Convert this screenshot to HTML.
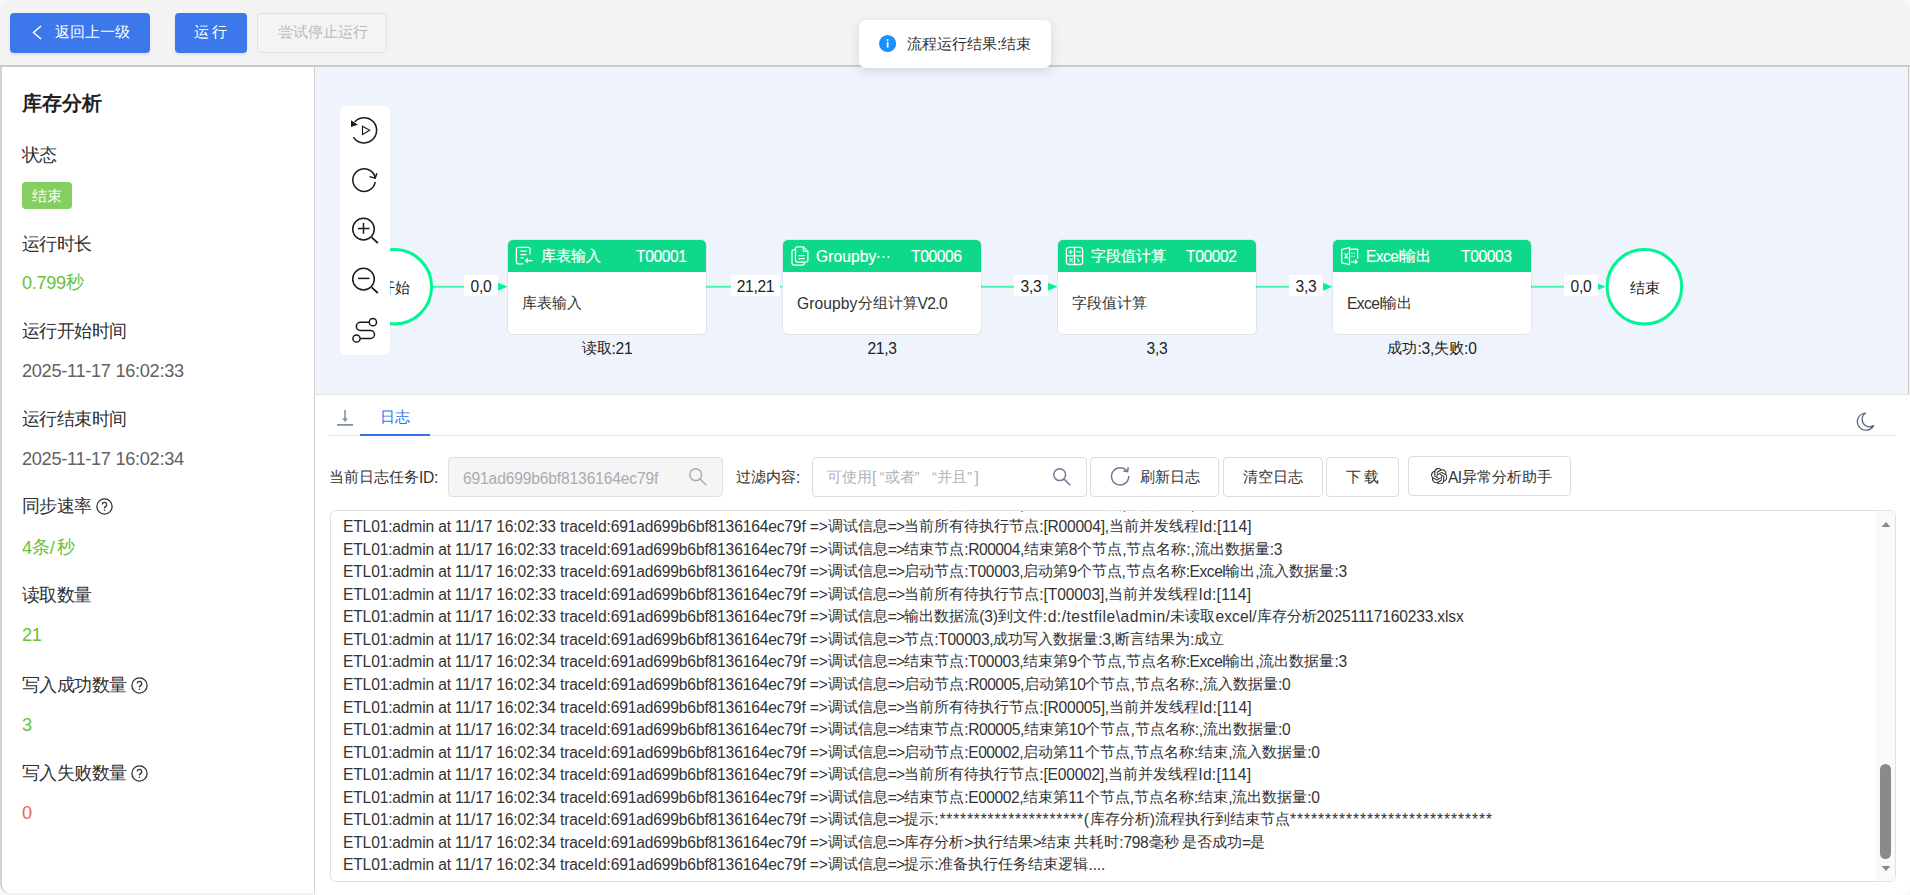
<!DOCTYPE html><html><head><meta charset="utf-8"><style>*{margin:0;padding:0;box-sizing:content-box}
html,body{width:1910px;height:895px;overflow:hidden}
body{position:relative;background:#f3f3f3;font-family:"Liberation Sans",sans-serif}
.abs{position:absolute}
.t{position:absolute;white-space:pre}
.btn{position:absolute;border-radius:4px}
.pri{background:#3c78ec;box-shadow:0 2px 3px rgba(0,0,0,0.08)}
.node{position:absolute;width:198px;height:94px;background:#fff;border-radius:5px;box-shadow:0 0 0 1px rgba(0,0,0,0.06);overflow:hidden}
.nh{height:32px;background:#0ed98a}
.qr{display:inline-block;width:15px;text-align:right}
.ql{display:inline-block;width:15px;text-align:left}
</style></head><body>
<div class="btn pri" style="left:10px;top:13px;width:140px;height:40px"></div>
<svg class="abs" style="left:0;top:0" width="60" height="60"><polyline points="41,26 33.5,32.5 41,39" fill="none" stroke="#fff" stroke-width="1.5"/></svg>
<div class="t" style="left:55px;top:17px;font-size:15px;font-weight:400;color:#fff;line-height:30px;">返回上一级</div>
<div class="btn pri" style="left:175px;top:13px;width:72px;height:40px"></div>
<div class="t" style="left:194px;top:17px;font-size:15px;font-weight:400;color:#fff;line-height:30px;">运</div>
<div class="t" style="left:212px;top:17px;font-size:15px;font-weight:400;color:#fff;line-height:30px;">行</div>
<div class="btn" style="left:257px;top:13px;width:128px;height:38px;border:1px solid #e2e2e2;background:#f4f4f4"></div>
<div class="t" style="left:278px;top:17px;font-size:15px;font-weight:400;color:#b9babd;line-height:30px;">尝试停止运行</div>
<div class="abs" style="left:0;top:65px;width:1910px;height:2px;background:#cacaca"></div>
<div class="abs" style="left:0;top:880px;width:315px;height:15px;background:#eef1f8"></div>
<div class="abs" style="left:0;top:67px;width:314px;height:826px;background:#fff;border-left:2px solid #d2d2d2;border-bottom-left-radius:9px;box-sizing:border-box"></div>
<div class="abs" style="left:314px;top:67px;width:1px;height:826px;background:#d0d0d0"></div>
<div class="t" style="left:22px;top:88px;font-size:20px;font-weight:700;color:#222;line-height:30px;">库存分析</div>
<div class="t" style="left:22px;top:140.7px;font-size:18px;font-weight:400;color:#303133;line-height:30px;transform:scale(0.9722);transform-origin:0 0">状态</div>
<div class="t" style="left:22px;top:229.7px;font-size:18px;font-weight:400;color:#303133;line-height:30px;transform:scale(0.9722);transform-origin:0 0">运行时长</div>
<div class="t" style="left:22px;top:317.2px;font-size:18px;font-weight:400;color:#303133;line-height:30px;transform:scale(0.9722);transform-origin:0 0">运行开始时间</div>
<div class="t" style="left:22px;top:404.7px;font-size:18px;font-weight:400;color:#303133;line-height:30px;transform:scale(0.9722);transform-origin:0 0">运行结束时间</div>
<div class="t" style="left:22px;top:491.7px;font-size:18px;font-weight:400;color:#303133;line-height:30px;transform:scale(0.9722);transform-origin:0 0">同步速率</div>
<svg class="abs" style="left:96px;top:497.5px" width="18" height="18"><circle cx="8.5" cy="8.5" r="7.6" fill="none" stroke="#303133" stroke-width="1.3"/><path d="M6.3 6.6 a2.2 2.2 0 1 1 3.2 2 c-.7 .35 -1 .7 -1 1.5 v.5" fill="none" stroke="#303133" stroke-width="1.3"/><circle cx="8.5" cy="12.3" r=".8" fill="#303133"/></svg>
<div class="t" style="left:22px;top:581.2px;font-size:18px;font-weight:400;color:#303133;line-height:30px;transform:scale(0.9722);transform-origin:0 0">读取数量</div>
<div class="t" style="left:22px;top:670.7px;font-size:18px;font-weight:400;color:#303133;line-height:30px;transform:scale(0.9722);transform-origin:0 0">写入成功数量</div>
<svg class="abs" style="left:131px;top:676.5px" width="18" height="18"><circle cx="8.5" cy="8.5" r="7.6" fill="none" stroke="#303133" stroke-width="1.3"/><path d="M6.3 6.6 a2.2 2.2 0 1 1 3.2 2 c-.7 .35 -1 .7 -1 1.5 v.5" fill="none" stroke="#303133" stroke-width="1.3"/><circle cx="8.5" cy="12.3" r=".8" fill="#303133"/></svg>
<div class="t" style="left:22px;top:758.7px;font-size:18px;font-weight:400;color:#303133;line-height:30px;transform:scale(0.9722);transform-origin:0 0">写入失败数量</div>
<svg class="abs" style="left:131px;top:764.5px" width="18" height="18"><circle cx="8.5" cy="8.5" r="7.6" fill="none" stroke="#303133" stroke-width="1.3"/><path d="M6.3 6.6 a2.2 2.2 0 1 1 3.2 2 c-.7 .35 -1 .7 -1 1.5 v.5" fill="none" stroke="#303133" stroke-width="1.3"/><circle cx="8.5" cy="12.3" r=".8" fill="#303133"/></svg>
<div class="abs" style="left:22px;top:182px;width:50px;height:27px;background:#85ce61;border-radius:4px"></div>
<div class="t" style="left:31.5px;top:180.5px;font-size:15px;font-weight:400;color:#fff;line-height:30px;">结束</div>
<div class="t" style="left:22px;top:267px;font-size:17.5px;font-weight:400;color:#67c23a;line-height:30px;"><span style="font-size:18.2px;letter-spacing:-0.359px;position:relative;top:1px">0.799</span>秒</div>
<div class="t" style="left:22px;top:355px;font-size:17.5px;font-weight:400;color:#606266;line-height:30px;"><span style="font-size:18.2px;letter-spacing:-0.303px;position:relative;top:1px">2025-11-17 16:02:33</span></div>
<div class="t" style="left:22px;top:443px;font-size:17.5px;font-weight:400;color:#606266;line-height:30px;"><span style="font-size:18.2px;letter-spacing:-0.303px;position:relative;top:1px">2025-11-17 16:02:34</span></div>
<div class="t" style="left:22px;top:531.5px;font-size:17.5px;font-weight:400;color:#67c23a;line-height:30px;"><span style="font-size:18.2px;letter-spacing:-0.406px;position:relative;top:1px">4</span>条<span style="font-size:18.2px;letter-spacing:1.812px;position:relative;top:1px">/</span>秒</div>
<div class="t" style="left:22px;top:619px;font-size:17.5px;font-weight:400;color:#67c23a;line-height:30px;"><span style="font-size:18.2px;letter-spacing:-0.398px;position:relative;top:1px">21</span></div>
<div class="t" style="left:22px;top:708.7px;font-size:17.5px;font-weight:400;color:#67c23a;line-height:30px;"><span style="font-size:18.2px;letter-spacing:-0.406px;position:relative;top:1px">3</span></div>
<div class="t" style="left:22px;top:797px;font-size:17.5px;font-weight:400;color:#e9654f;line-height:30px;"><span style="font-size:18.2px;letter-spacing:-0.406px;position:relative;top:1px">0</span></div>
<div class="abs" style="left:315px;top:67px;width:1594px;height:327px;background:#eff3fb;border-right:1px solid #c6c6c6;box-sizing:border-box"></div>
<div class="abs" style="left:315px;top:394px;width:1594px;height:1px;background:#e3e5ea"></div>
<svg class="abs" style="left:0;top:0" width="1910" height="400"><line x1="433" y1="286.8" x2="502" y2="286.8" stroke="#47f5b0" stroke-width="2"/><polygon points="498,282.8 507.5,286.8 498,290.8" fill="#00f59a"/><line x1="706" y1="286.8" x2="777" y2="286.8" stroke="#47f5b0" stroke-width="2"/><polygon points="773,282.8 782.5,286.8 773,290.8" fill="#00f59a"/><line x1="981" y1="286.8" x2="1052" y2="286.8" stroke="#47f5b0" stroke-width="2"/><polygon points="1048,282.8 1057.5,286.8 1048,290.8" fill="#00f59a"/><line x1="1256" y1="286.8" x2="1327" y2="286.8" stroke="#47f5b0" stroke-width="2"/><polygon points="1323,282.8 1332.5,286.8 1323,290.8" fill="#00f59a"/><line x1="1531" y1="286.8" x2="1600" y2="286.8" stroke="#47f5b0" stroke-width="2"/><polygon points="1596,282.8 1605.5,286.8 1596,290.8" fill="#00f59a"/><circle cx="394.3" cy="286.8" r="37.3" fill="#fff" stroke="#00f593" stroke-width="3"/><circle cx="1644.4" cy="286.8" r="37.3" fill="#fff" stroke="#00f593" stroke-width="3"/></svg>
<div class="abs" style="left:464px;top:275px;width:34px;height:21px;background:#fff"></div>
<div class="t" style="left:464px;top:271px;width:34px;text-align:center;font-size:15px;line-height:30px;color:#222"><span style="font-size:15.6px;letter-spacing:-0.286px;position:relative;top:1px">0,0</span></div>
<div class="abs" style="left:731px;top:275px;width:49px;height:21px;background:#fff"></div>
<div class="t" style="left:731px;top:271px;width:49px;text-align:center;font-size:15px;line-height:30px;color:#222"><span style="font-size:15.6px;letter-spacing:-0.309px;position:relative;top:1px">21,21</span></div>
<div class="abs" style="left:1014px;top:275px;width:34px;height:21px;background:#fff"></div>
<div class="t" style="left:1014px;top:271px;width:34px;text-align:center;font-size:15px;line-height:30px;color:#222"><span style="font-size:15.6px;letter-spacing:-0.286px;position:relative;top:1px">3,3</span></div>
<div class="abs" style="left:1289px;top:275px;width:34px;height:21px;background:#fff"></div>
<div class="t" style="left:1289px;top:271px;width:34px;text-align:center;font-size:15px;line-height:30px;color:#222"><span style="font-size:15.6px;letter-spacing:-0.286px;position:relative;top:1px">3,3</span></div>
<div class="abs" style="left:1564px;top:275px;width:34px;height:21px;background:#fff"></div>
<div class="t" style="left:1564px;top:271px;width:34px;text-align:center;font-size:15px;line-height:30px;color:#222"><span style="font-size:15.6px;letter-spacing:-0.286px;position:relative;top:1px">0,0</span></div>
<div class="t" style="left:380px;top:272.5px;font-size:15px;font-weight:400;color:#222;line-height:30px;">开始</div>
<div class="t" style="left:1630px;top:272.5px;font-size:15px;font-weight:400;color:#222;line-height:30px;">结束</div>
<div class="node" style="left:508px;top:240px"><div class="nh"></div></div>
<div class="t" style="left:541px;top:241px;font-size:15px;font-weight:400;color:#fff;line-height:30px;-webkit-text-stroke:0.2px #fff">库表输入</div>
<div class="t" style="left:636px;top:241px;font-size:15px;font-weight:400;color:#fff;line-height:30px;-webkit-text-stroke:0.2px #fff"><span style="font-size:15.6px;letter-spacing:-0.378px;position:relative;top:1px">T00001</span></div>
<div class="t" style="left:522px;top:288px;font-size:15px;color:#333;line-height:30px">库表输入</div>
<div class="t" style="left:508px;top:333px;width:198px;text-align:center;font-size:15px;color:#222;line-height:30px">读取<span style="font-size:15.6px;letter-spacing:-0.286px;position:relative;top:1px">:21</span></div>
<svg class="abs" style="left:515px;top:246px" width="20" height="20"><g fill="none" stroke="#fff" stroke-width="1.25"><path d="M15 8.6 V3.4 A2 2 0 0 0 13 1.4 H3.4 A2 2 0 0 0 1.4 3.4 V15.9 A2 2 0 0 0 3.4 17.9 H8.3"/><path d="M5.4 5 H11.5 M5.4 8.5 H11.5 M5.4 11.8 H8.7"/><path d="M10.8 14.7 H17.6 M12.8 12.5 L10.6 14.7 L12.8 16.9"/></g></svg>
<div class="node" style="left:783px;top:240px"><div class="nh"></div></div>
<div class="t" style="left:816px;top:241px;font-size:15px;font-weight:400;color:#fff;line-height:30px;-webkit-text-stroke:0.2px #fff"><span style="font-size:15.6px;letter-spacing:0.100px;position:relative;top:1px">Groupby</span></div>
<div class="t" style="left:911px;top:241px;font-size:15px;font-weight:400;color:#fff;line-height:30px;-webkit-text-stroke:0.2px #fff"><span style="font-size:15.6px;letter-spacing:-0.378px;position:relative;top:1px">T00006</span></div>
<div class="t" style="left:797px;top:288px;font-size:15px;color:#333;line-height:30px"><span style="font-size:15.6px;letter-spacing:0.100px;position:relative;top:1px">Groupby</span>分组计算<span style="font-size:15.6px;letter-spacing:-0.660px;position:relative;top:1px">V2.0</span></div>
<div class="t" style="left:783px;top:333px;width:198px;text-align:center;font-size:15px;color:#222;line-height:30px"><span style="font-size:15.6px;letter-spacing:-0.301px;position:relative;top:1px">21,3</span></div>
<svg class="abs" style="left:790px;top:246px" width="20" height="20"><g fill="none" stroke="#fff" stroke-width="1.25"><path d="M7.5 0.8 H13.3 L17.9 5.4 V14.2 A2 2 0 0 1 15.9 16.2 H7.5 A2 2 0 0 1 5.5 14.2 V2.8 A2 2 0 0 1 7.5 0.8 Z"/><path d="M13.3 0.8 V3.4 A2 2 0 0 0 15.3 5.4 H17.9"/><path d="M5.5 3.6 H4 A2 2 0 0 0 2 5.6 V17.1 A2 2 0 0 0 4 19.1 H12.4 A2 2 0 0 0 14.4 17.1 V16.2"/><path d="M8.4 9.5 H14.6 M8.4 12.6 H14.6"/></g></svg>
<svg class="abs" style="left:876px;top:254px" width="20" height="6"><circle cx="2.5" cy="3" r="1.1" fill="#fff"/><circle cx="7.5" cy="3" r="1.1" fill="#fff"/><circle cx="12.5" cy="3" r="1.1" fill="#fff"/></svg>
<div class="node" style="left:1058px;top:240px"><div class="nh"></div></div>
<div class="t" style="left:1091px;top:241px;font-size:15px;font-weight:400;color:#fff;line-height:30px;-webkit-text-stroke:0.2px #fff">字段值计算</div>
<div class="t" style="left:1186px;top:241px;font-size:15px;font-weight:400;color:#fff;line-height:30px;-webkit-text-stroke:0.2px #fff"><span style="font-size:15.6px;letter-spacing:-0.378px;position:relative;top:1px">T00002</span></div>
<div class="t" style="left:1072px;top:288px;font-size:15px;color:#333;line-height:30px">字段值计算</div>
<div class="t" style="left:1058px;top:333px;width:198px;text-align:center;font-size:15px;color:#222;line-height:30px"><span style="font-size:15.6px;letter-spacing:-0.286px;position:relative;top:1px">3,3</span></div>
<svg class="abs" style="left:1065px;top:246px" width="20" height="20"><g fill="none" stroke="#fff"><rect x="1.4" y="1.4" width="16.2" height="17.1" rx="2.6" stroke-width="1.3"/><path d="M9.5 1.4 V18.5 M1.4 9.9 H17.6" stroke-width="1.3"/><path d="M3.6 6 H7.6 M5.6 4 V8 M11.2 5.8 H15.9 M4.4 12.3 L7.7 15.8 M7.7 12.3 L4.4 15.8 M12.1 12.4 L14.4 15.6" stroke-width="1.2"/></g></svg>
<div class="node" style="left:1333px;top:240px"><div class="nh"></div></div>
<div class="t" style="left:1366px;top:241px;font-size:15px;font-weight:400;color:#fff;line-height:30px;-webkit-text-stroke:0.2px #fff"><span style="font-size:15.6px;letter-spacing:-0.553px;position:relative;top:1px">Excel</span>输出</div>
<div class="t" style="left:1461px;top:241px;font-size:15px;font-weight:400;color:#fff;line-height:30px;-webkit-text-stroke:0.2px #fff"><span style="font-size:15.6px;letter-spacing:-0.378px;position:relative;top:1px">T00003</span></div>
<div class="t" style="left:1347px;top:288px;font-size:15px;color:#333;line-height:30px"><span style="font-size:15.6px;letter-spacing:-0.553px;position:relative;top:1px">Excel</span>输出</div>
<div class="t" style="left:1333px;top:333px;width:198px;text-align:center;font-size:15px;color:#222;line-height:30px">成功<span style="font-size:15.6px;letter-spacing:-0.224px;position:relative;top:1px">:3,</span>失败<span style="font-size:15.6px;letter-spacing:-0.258px;position:relative;top:1px">:0</span></div>
<svg class="abs" style="left:1340px;top:246px" width="20" height="20"><g fill="none" stroke="#fff" stroke-width="1.25" stroke-linejoin="round"><path d="M1.7 3.4 L9.5 1.7 V18.5 L1.7 16.8 Z"/><path d="M10.1 3.1 H17.6 V12.7"/><path d="M4.6 7.3 L7.8 12.6 M7.8 7.3 L4.6 12.6" stroke-width="1.1"/><path d="M11.3 7.2 H15.2 M11.3 10.2 H15.2" stroke-width="1.1" stroke-dasharray="1.3 1.1"/><path d="M11.2 15.9 H16.8 M15 13.8 L17.1 15.9 L15 18" /></g></svg>
<div class="abs" style="left:340px;top:106px;width:50px;height:249px;background:#fff;border-radius:6px"></div>
<svg class="abs" style="left:340px;top:106px" width="50" height="249">
<g fill="none" stroke="#1a1a1a" stroke-width="1.5">
<path d="M13.4 31.1 A12.6 12.6 0 1 0 14.8 15.7"/>
<path d="M22.5 20.3 L29.7 24.3 L22.5 28.5 Z" stroke-width="1.15"/>
<path d="M35.24 75.98 A11.3 11.3 0 1 1 35.24 72.22"/><polyline points="29.5,70.6 35.24,72.2 36.8,67.3"/>
<circle cx="23.5" cy="123.1" r="10.8"/><path d="M18 122.4 H29.5 M23.5 116.9 V127.7"/><path d="M31.7 131.4 L37.8 137" stroke-width="1.7"/>
<circle cx="23.5" cy="173.1" r="10.8"/><path d="M18 172.4 H29.5"/><path d="M31.7 181.4 L37.8 187" stroke-width="1.7"/>
<circle cx="32.9" cy="216.2" r="3.6"/><circle cx="16.5" cy="232.5" r="3.6"/>
<path d="M29.3 216.2 H20.5 A4.15 4.15 0 0 0 20.5 224.5 H30.5 A4.0 4.0 0 0 1 30.5 232.5 H20.1"/>
</g>
<polygon points="11,14.2 11,20.9 17.9,18.7" fill="#1a1a1a"/>
</svg>
<div class="abs" style="left:315px;top:395px;width:1595px;height:500px;background:#fff"></div>
<svg class="abs" style="left:330px;top:400px" width="30" height="30"><line x1="15" y1="10" x2="15" y2="19" stroke="#8590a6" stroke-width="1.6"/><polygon points="12,18.5 18,18.5 15,22" fill="#8590a6"/><rect x="7" y="24" width="16" height="1.8" fill="#8590a6"/></svg>
<div class="t" style="left:380px;top:401.5px;font-size:15px;font-weight:400;color:#2f6fe8;line-height:30px;">日志</div>
<div class="abs" style="left:329px;top:435px;width:1567px;height:1px;background:#e5e5e5"></div>
<div class="abs" style="left:360px;top:434px;width:70px;height:2px;background:#2f6fe8"></div>
<svg class="abs" style="left:1850px;top:405px" width="30" height="30"><path d="M15.5 8 A8.6 8.6 0 1 0 23.6 20.6 A7 7 0 0 1 15.5 8 Z" fill="none" stroke="#56617d" stroke-width="1.25" stroke-linejoin="round"/></svg>
<div class="t" style="left:329px;top:462px;font-size:15px;font-weight:400;color:#333;line-height:30px;">当前日志任务<span style="font-size:15.6px;letter-spacing:-0.349px;position:relative;top:1px">ID:</span></div>
<div class="abs" style="left:448px;top:457px;width:273px;height:38px;background:#f5f5f5;border:1px solid #e0e0e0;border-radius:4px"></div>
<div class="t" style="left:463px;top:463px;font-size:15px;font-weight:400;color:#a8abb2;line-height:30px;"><span style="font-size:15.6px;letter-spacing:-0.141px;position:relative;top:1px">691ad699b6bf8136164ec79f</span></div>
<svg class="abs" style="left:686px;top:465px" width="24" height="24"><circle cx="9.7" cy="9.7" r="5.9" fill="none" stroke="#acacac" stroke-width="1.5"/><path d="M14 14 L19.8 19.8" stroke="#acacac" stroke-width="1.6" stroke-linecap="round"/></svg>
<div class="t" style="left:736px;top:462px;font-size:15px;font-weight:400;color:#333;line-height:30px;">过滤内容<span style="font-size:15.6px;letter-spacing:-0.172px;position:relative;top:1px">:</span></div>
<div class="abs" style="left:812px;top:457px;width:273px;height:38px;background:#fff;border:1px solid #dcdcdc;border-radius:4px"></div>
<div class="t" style="left:827px;top:462px;font-size:15px;color:#b0b3b8;line-height:30px">可使用<span style="font-size:15.6px;letter-spacing:0.734px;position:relative;top:1px">[</span><span class="qr" style="width:7.5px">“</span>或者<span class="ql">”</span><span class="qr" style="width:7.5px">“</span>并且<span class="ql" style="width:7.5px">”</span><span style="font-size:15.6px;letter-spacing:0.734px;position:relative;top:1px">]</span></div>
<svg class="abs" style="left:1050px;top:465px" width="24" height="24"><circle cx="9.7" cy="9.7" r="5.9" fill="none" stroke="#6f7b99" stroke-width="1.5"/><path d="M14 14 L19.8 19.8" stroke="#6f7b99" stroke-width="1.6" stroke-linecap="round"/></svg>
<div class="abs" style="left:1090px;top:457px;width:127px;height:38px;border:1px solid #dcdcdc;border-radius:4px;background:#fff"></div>
<div class="abs" style="left:1223px;top:457px;width:98px;height:38px;border:1px solid #dcdcdc;border-radius:4px;background:#fff"></div>
<div class="abs" style="left:1326px;top:457px;width:71px;height:38px;border:1px solid #dcdcdc;border-radius:4px;background:#fff"></div>
<div class="abs" style="left:1408px;top:456px;width:161px;height:38px;border:1px solid #dcdcdc;border-radius:4px;background:#fff"></div>
<svg class="abs" style="left:1105px;top:461px" width="30" height="30"><path d="M22 10.2 A8.6 8.6 0 1 0 23.7 15" fill="none" stroke="#6b7a99" stroke-width="1.5"/><polyline points="23.2,6.2 22.6,10.6 18.4,10.1" fill="none" stroke="#6b7a99" stroke-width="1.5"/></svg>
<div class="t" style="left:1140px;top:462.2px;font-size:15px;font-weight:400;color:#333;line-height:30px;">刷新日志</div>
<div class="t" style="left:1243px;top:462.2px;font-size:15px;font-weight:400;color:#333;line-height:30px;">清空日志</div>
<div class="t" style="left:1346px;top:462.2px;font-size:15px;font-weight:400;color:#333;line-height:30px;">下</div>
<div class="t" style="left:1364px;top:462.2px;font-size:15px;font-weight:400;color:#333;line-height:30px;">载</div>
<svg class="abs" style="left:1430.5px;top:467.5px" width="16.5" height="16.5" viewBox="0 0 24 24"><path fill="#2a2a2a" d="M22.2819 9.8211a5.9847 5.9847 0 0 0-.5157-4.9108 6.0462 6.0462 0 0 0-6.5098-2.9A6.0651 6.0651 0 0 0 4.9807 4.1818a5.9847 5.9847 0 0 0-3.9977 2.9 6.0462 6.0462 0 0 0 .7427 7.0966 5.98 5.98 0 0 0 .511 4.9107 6.051 6.051 0 0 0 6.5146 2.9001A5.9847 5.9847 0 0 0 13.2599 24a6.0557 6.0557 0 0 0 5.7718-4.2058 5.9894 5.9894 0 0 0 3.9977-2.9001 6.0557 6.0557 0 0 0-.7475-7.0729zm-9.022 12.6081a4.4755 4.4755 0 0 1-2.8764-1.0408l.1419-.0804 4.7783-2.7582a.7948.7948 0 0 0 .3927-.6813v-6.7369l2.02 1.1686a.071.071 0 0 1 .038.052v5.5826a4.504 4.504 0 0 1-4.4945 4.4944zm-9.6607-4.1254a4.4708 4.4708 0 0 1-.5346-3.0137l.142.0852 4.783 2.7582a.7712.7712 0 0 0 .7806 0l5.8428-3.3685v2.3324a.0804.0804 0 0 1-.0332.0615L9.74 19.9502a4.4992 4.4992 0 0 1-6.1408-1.6464zM2.3408 7.8956a4.485 4.485 0 0 1 2.3655-1.9728V11.6a.7664.7664 0 0 0 .3879.6765l5.8144 3.3543-2.0201 1.1685a.0757.0757 0 0 1-.071 0l-4.8303-2.7865A4.504 4.504 0 0 1 2.3408 7.872zm16.5963 3.8558L13.1038 8.364 15.1192 7.2a.0757.0757 0 0 1 .071 0l4.8303 2.7913a4.4944 4.4944 0 0 1-.6765 8.1042v-5.6772a.79.79 0 0 0-.407-.667zm2.0107-3.0231l-.142-.0852-4.7735-2.7818a.7759.7759 0 0 0-.7854 0L9.409 9.2297V6.8974a.0662.0662 0 0 1 .0284-.0615l4.8303-2.7866a4.4992 4.4992 0 0 1 6.6802 4.66zM8.3065 12.863l-2.02-1.1638a.0804.0804 0 0 1-.038-.0567V6.0742a4.4992 4.4992 0 0 1 7.3757-3.4537l-.142.0805L8.704 5.459a.7948.7948 0 0 0-.3927.6813zm1.0976-2.3654l2.602-1.4998 2.6069 1.4998v2.9994l-2.5974 1.4997-2.6067-1.4997Z"/></svg>
<div class="t" style="left:1448px;top:462.2px;font-size:15px;font-weight:400;color:#333;line-height:30px;"><span style="font-size:15.6px;letter-spacing:-0.609px;position:relative;top:1px">AI</span>异常分析助手</div>
<div class="abs" style="left:330px;top:510px;width:1564px;height:370px;border:1px solid #e0e0e0;border-radius:6px;overflow:hidden;background:#fff">
<div class="abs" style="left:1545px;top:0;width:20px;height:370px;background:#fafafa"></div>
<div class="abs" style="left:1549px;top:253px;width:11px;height:95px;background:#8a8a8a;border-radius:5.5px"></div>
<svg class="abs" style="left:1545px;top:0" width="20" height="370"><polygon points="5.5,16 14.5,16 10,11" fill="#8a8a8a"/><polygon points="5.5,355 14.5,355 10,360" fill="#8a8a8a"/></svg>
<div class="abs" style="left:12px;top:-18.29px;line-height:22.54px;font-size:15px;color:#333"><div style="height:22.54px;white-space:pre"><span style="font-size:15.6px;letter-spacing:-0.156px;position:relative;top:1px">ETL01:admin at 11/17 16:02:33 traceId:691ad699b6bf8136164ec79f =&gt;</span>调试信息<span style="font-size:15.6px;letter-spacing:-0.781px;position:relative;top:1px">=&gt;</span>启动节点<span style="font-size:15.6px;letter-spacing:-0.475px;position:relative;top:1px">:R00004,</span>启动第<span style="font-size:15.6px;letter-spacing:-0.359px;position:relative;top:1px">8</span>个节点<span style="font-size:15.6px;letter-spacing:-0.172px;position:relative;top:1px">,</span>节点名称<span style="font-size:15.6px;letter-spacing:-0.164px;position:relative;top:1px">:,</span>流入数据量<span style="font-size:15.6px;letter-spacing:-0.258px;position:relative;top:1px">:3</span></div><div style="height:22.54px;white-space:pre"><span style="font-size:15.6px;letter-spacing:-0.156px;position:relative;top:1px">ETL01:admin at 11/17 16:02:33 traceId:691ad699b6bf8136164ec79f =&gt;</span>调试信息<span style="font-size:15.6px;letter-spacing:-0.781px;position:relative;top:1px">=&gt;</span>当前所有待执行节点<span style="font-size:15.6px;letter-spacing:-0.233px;position:relative;top:1px">:[R00004],</span>当前并发线程<span style="font-size:15.6px;letter-spacing:0.264px;position:relative;top:1px">Id:[114]</span></div><div style="height:22.54px;white-space:pre"><span style="font-size:15.6px;letter-spacing:-0.156px;position:relative;top:1px">ETL01:admin at 11/17 16:02:33 traceId:691ad699b6bf8136164ec79f =&gt;</span>调试信息<span style="font-size:15.6px;letter-spacing:-0.781px;position:relative;top:1px">=&gt;</span>结束节点<span style="font-size:15.6px;letter-spacing:-0.475px;position:relative;top:1px">:R00004,</span>结束第<span style="font-size:15.6px;letter-spacing:-0.359px;position:relative;top:1px">8</span>个节点<span style="font-size:15.6px;letter-spacing:-0.172px;position:relative;top:1px">,</span>节点名称<span style="font-size:15.6px;letter-spacing:-0.164px;position:relative;top:1px">:,</span>流出数据量<span style="font-size:15.6px;letter-spacing:-0.258px;position:relative;top:1px">:3</span></div><div style="height:22.54px;white-space:pre"><span style="font-size:15.6px;letter-spacing:-0.156px;position:relative;top:1px">ETL01:admin at 11/17 16:02:33 traceId:691ad699b6bf8136164ec79f =&gt;</span>调试信息<span style="font-size:15.6px;letter-spacing:-0.781px;position:relative;top:1px">=&gt;</span>启动节点<span style="font-size:15.6px;letter-spacing:-0.326px;position:relative;top:1px">:T00003,</span>启动第<span style="font-size:15.6px;letter-spacing:-0.359px;position:relative;top:1px">9</span>个节点<span style="font-size:15.6px;letter-spacing:-0.172px;position:relative;top:1px">,</span>节点名称<span style="font-size:15.6px;letter-spacing:-0.487px;position:relative;top:1px">:Excel</span>输出<span style="font-size:15.6px;letter-spacing:-0.172px;position:relative;top:1px">,</span>流入数据量<span style="font-size:15.6px;letter-spacing:-0.258px;position:relative;top:1px">:3</span></div><div style="height:22.54px;white-space:pre"><span style="font-size:15.6px;letter-spacing:-0.156px;position:relative;top:1px">ETL01:admin at 11/17 16:02:33 traceId:691ad699b6bf8136164ec79f =&gt;</span>调试信息<span style="font-size:15.6px;letter-spacing:-0.781px;position:relative;top:1px">=&gt;</span>当前所有待执行节点<span style="font-size:15.6px;letter-spacing:-0.113px;position:relative;top:1px">:[T00003],</span>当前并发线程<span style="font-size:15.6px;letter-spacing:0.264px;position:relative;top:1px">Id:[114]</span></div><div style="height:22.54px;white-space:pre"><span style="font-size:15.6px;letter-spacing:-0.156px;position:relative;top:1px">ETL01:admin at 11/17 16:02:33 traceId:691ad699b6bf8136164ec79f =&gt;</span>调试信息<span style="font-size:15.6px;letter-spacing:-0.781px;position:relative;top:1px">=&gt;</span>输出数据流<span style="font-size:15.6px;letter-spacing:-0.198px;position:relative;top:1px">(3)</span>到文件<span style="font-size:15.6px;letter-spacing:0.516px;position:relative;top:1px">:d:/testfile\admin/</span>未读取<span style="font-size:15.6px;letter-spacing:0.062px;position:relative;top:1px">excel/</span>库存分析<span style="font-size:15.6px;letter-spacing:-0.176px;position:relative;top:1px">20251117160233.xlsx</span></div><div style="height:22.54px;white-space:pre"><span style="font-size:15.6px;letter-spacing:-0.156px;position:relative;top:1px">ETL01:admin at 11/17 16:02:34 traceId:691ad699b6bf8136164ec79f =&gt;</span>调试信息<span style="font-size:15.6px;letter-spacing:-0.781px;position:relative;top:1px">=&gt;</span>节点<span style="font-size:15.6px;letter-spacing:-0.326px;position:relative;top:1px">:T00003,</span>成功写入数据量<span style="font-size:15.6px;letter-spacing:-0.224px;position:relative;top:1px">:3,</span>断言结果为<span style="font-size:15.6px;letter-spacing:-0.172px;position:relative;top:1px">:</span>成立</div><div style="height:22.54px;white-space:pre"><span style="font-size:15.6px;letter-spacing:-0.156px;position:relative;top:1px">ETL01:admin at 11/17 16:02:34 traceId:691ad699b6bf8136164ec79f =&gt;</span>调试信息<span style="font-size:15.6px;letter-spacing:-0.781px;position:relative;top:1px">=&gt;</span>结束节点<span style="font-size:15.6px;letter-spacing:-0.326px;position:relative;top:1px">:T00003,</span>结束第<span style="font-size:15.6px;letter-spacing:-0.359px;position:relative;top:1px">9</span>个节点<span style="font-size:15.6px;letter-spacing:-0.172px;position:relative;top:1px">,</span>节点名称<span style="font-size:15.6px;letter-spacing:-0.487px;position:relative;top:1px">:Excel</span>输出<span style="font-size:15.6px;letter-spacing:-0.172px;position:relative;top:1px">,</span>流出数据量<span style="font-size:15.6px;letter-spacing:-0.258px;position:relative;top:1px">:3</span></div><div style="height:22.54px;white-space:pre"><span style="font-size:15.6px;letter-spacing:-0.156px;position:relative;top:1px">ETL01:admin at 11/17 16:02:34 traceId:691ad699b6bf8136164ec79f =&gt;</span>调试信息<span style="font-size:15.6px;letter-spacing:-0.781px;position:relative;top:1px">=&gt;</span>启动节点<span style="font-size:15.6px;letter-spacing:-0.475px;position:relative;top:1px">:R00005,</span>启动第<span style="font-size:15.6px;letter-spacing:-0.352px;position:relative;top:1px">10</span>个节点<span style="font-size:15.6px;letter-spacing:-0.172px;position:relative;top:1px">,</span>节点名称<span style="font-size:15.6px;letter-spacing:-0.164px;position:relative;top:1px">:,</span>流入数据量<span style="font-size:15.6px;letter-spacing:-0.258px;position:relative;top:1px">:0</span></div><div style="height:22.54px;white-space:pre"><span style="font-size:15.6px;letter-spacing:-0.156px;position:relative;top:1px">ETL01:admin at 11/17 16:02:34 traceId:691ad699b6bf8136164ec79f =&gt;</span>调试信息<span style="font-size:15.6px;letter-spacing:-0.781px;position:relative;top:1px">=&gt;</span>当前所有待执行节点<span style="font-size:15.6px;letter-spacing:-0.233px;position:relative;top:1px">:[R00005],</span>当前并发线程<span style="font-size:15.6px;letter-spacing:0.264px;position:relative;top:1px">Id:[114]</span></div><div style="height:22.54px;white-space:pre"><span style="font-size:15.6px;letter-spacing:-0.156px;position:relative;top:1px">ETL01:admin at 11/17 16:02:34 traceId:691ad699b6bf8136164ec79f =&gt;</span>调试信息<span style="font-size:15.6px;letter-spacing:-0.781px;position:relative;top:1px">=&gt;</span>结束节点<span style="font-size:15.6px;letter-spacing:-0.475px;position:relative;top:1px">:R00005,</span>结束第<span style="font-size:15.6px;letter-spacing:-0.352px;position:relative;top:1px">10</span>个节点<span style="font-size:15.6px;letter-spacing:-0.172px;position:relative;top:1px">,</span>节点名称<span style="font-size:15.6px;letter-spacing:-0.164px;position:relative;top:1px">:,</span>流出数据量<span style="font-size:15.6px;letter-spacing:-0.258px;position:relative;top:1px">:0</span></div><div style="height:22.54px;white-space:pre"><span style="font-size:15.6px;letter-spacing:-0.156px;position:relative;top:1px">ETL01:admin at 11/17 16:02:34 traceId:691ad699b6bf8136164ec79f =&gt;</span>调试信息<span style="font-size:15.6px;letter-spacing:-0.781px;position:relative;top:1px">=&gt;</span>启动节点<span style="font-size:15.6px;letter-spacing:-0.453px;position:relative;top:1px">:E00002,</span>启动第<span style="font-size:15.6px;letter-spacing:0.234px;position:relative;top:1px">11</span>个节点<span style="font-size:15.6px;letter-spacing:-0.172px;position:relative;top:1px">,</span>节点名称<span style="font-size:15.6px;letter-spacing:-0.172px;position:relative;top:1px">:</span>结束<span style="font-size:15.6px;letter-spacing:-0.172px;position:relative;top:1px">,</span>流入数据量<span style="font-size:15.6px;letter-spacing:-0.258px;position:relative;top:1px">:0</span></div><div style="height:22.54px;white-space:pre"><span style="font-size:15.6px;letter-spacing:-0.156px;position:relative;top:1px">ETL01:admin at 11/17 16:02:34 traceId:691ad699b6bf8136164ec79f =&gt;</span>调试信息<span style="font-size:15.6px;letter-spacing:-0.781px;position:relative;top:1px">=&gt;</span>当前所有待执行节点<span style="font-size:15.6px;letter-spacing:-0.214px;position:relative;top:1px">:[E00002],</span>当前并发线程<span style="font-size:15.6px;letter-spacing:0.264px;position:relative;top:1px">Id:[114]</span></div><div style="height:22.54px;white-space:pre"><span style="font-size:15.6px;letter-spacing:-0.156px;position:relative;top:1px">ETL01:admin at 11/17 16:02:34 traceId:691ad699b6bf8136164ec79f =&gt;</span>调试信息<span style="font-size:15.6px;letter-spacing:-0.781px;position:relative;top:1px">=&gt;</span>结束节点<span style="font-size:15.6px;letter-spacing:-0.453px;position:relative;top:1px">:E00002,</span>结束第<span style="font-size:15.6px;letter-spacing:0.234px;position:relative;top:1px">11</span>个节点<span style="font-size:15.6px;letter-spacing:-0.172px;position:relative;top:1px">,</span>节点名称<span style="font-size:15.6px;letter-spacing:-0.172px;position:relative;top:1px">:</span>结束<span style="font-size:15.6px;letter-spacing:-0.172px;position:relative;top:1px">,</span>流出数据量<span style="font-size:15.6px;letter-spacing:-0.258px;position:relative;top:1px">:0</span></div><div style="height:22.54px;white-space:pre"><span style="font-size:15.6px;letter-spacing:-0.156px;position:relative;top:1px">ETL01:admin at 11/17 16:02:34 traceId:691ad699b6bf8136164ec79f =&gt;</span>调试信息<span style="font-size:15.6px;letter-spacing:-0.781px;position:relative;top:1px">=&gt;</span>提示<span style="font-size:15.6px;letter-spacing:0.807px;position:relative;top:1px">:*********************(</span>库存分析<span style="font-size:15.6px;letter-spacing:-0.125px;position:relative;top:1px">)</span>流程执行到结束节点<span style="font-size:15.6px;letter-spacing:0.936px;position:relative;top:1px">*****************************</span></div><div style="height:22.54px;white-space:pre"><span style="font-size:15.6px;letter-spacing:-0.156px;position:relative;top:1px">ETL01:admin at 11/17 16:02:34 traceId:691ad699b6bf8136164ec79f =&gt;</span>调试信息<span style="font-size:15.6px;letter-spacing:-0.781px;position:relative;top:1px">=&gt;</span>库存分析<span style="font-size:15.6px;letter-spacing:-0.781px;position:relative;top:1px">&gt;</span>执行结果<span style="font-size:15.6px;letter-spacing:-0.781px;position:relative;top:1px">&gt;</span>结束<span style="font-size:15.6px;letter-spacing:-0.969px;position:relative;top:1px"> </span>共耗时<span style="font-size:15.6px;letter-spacing:-0.301px;position:relative;top:1px">:798</span>毫秒<span style="font-size:15.6px;letter-spacing:-0.969px;position:relative;top:1px"> </span>是否成功<span style="font-size:15.6px;letter-spacing:-0.781px;position:relative;top:1px">=</span>是</div><div style="height:22.54px;white-space:pre"><span style="font-size:15.6px;letter-spacing:-0.156px;position:relative;top:1px">ETL01:admin at 11/17 16:02:34 traceId:691ad699b6bf8136164ec79f =&gt;</span>调试信息<span style="font-size:15.6px;letter-spacing:-0.781px;position:relative;top:1px">=&gt;</span>提示<span style="font-size:15.6px;letter-spacing:-0.172px;position:relative;top:1px">:</span>准备执行任务结束逻辑<span style="font-size:15.6px;letter-spacing:-0.164px;position:relative;top:1px">....</span></div></div></div>
<div class="abs" style="left:859px;top:20px;width:192px;height:48px;background:#fff;border-radius:7px;box-shadow:0 3px 12px rgba(0,0,0,0.12)"></div>
<svg class="abs" style="left:878px;top:34px" width="20" height="20"><circle cx="9.6" cy="9.5" r="8.6" fill="#1890ff"/><rect x="8.8" y="8" width="1.7" height="5.6" fill="#fff"/><circle cx="9.65" cy="5.9" r="1" fill="#fff"/></svg>
<div class="t" style="left:907px;top:29px;font-size:15px;font-weight:400;color:#333;line-height:30px;">流程运行结果<span style="font-size:15.6px;letter-spacing:-0.172px;position:relative;top:1px">:</span>结束</div>
<div class="abs" style="left:0;top:0;width:1910px;height:895px;border-radius:10px;box-shadow:0 0 0 30px #f9f9f9"></div>
</body></html>
